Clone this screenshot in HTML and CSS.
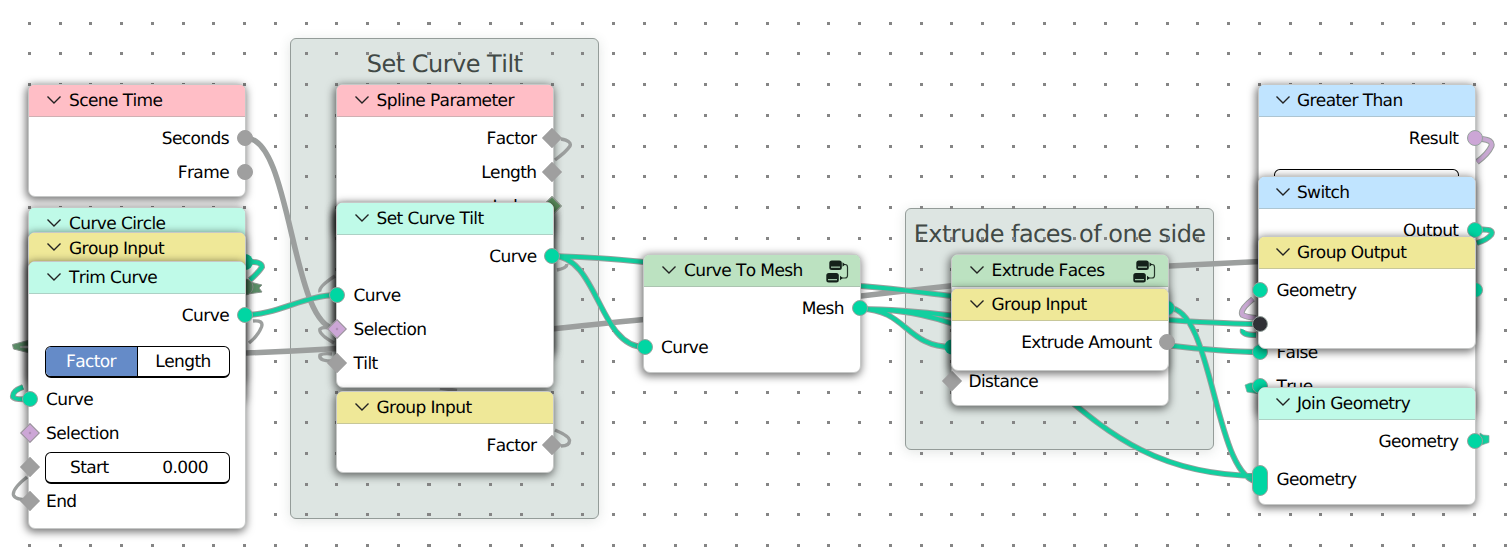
FILE: index.html
```html
<!DOCTYPE html>
<html lang="en">
<head>
<meta charset="utf-8">
<title>Geometry Nodes</title>
<link rel="stylesheet" href="styles.css">
</head>
<body>
<svg class="defs" width="0" height="0">
  <symbol id="chev" viewBox="0 0 16 10"><path d="M1.500 1.500 8 8l6.500-6.500" fill="none" stroke="#222" stroke-width="1.400"/></symbol>
  <symbol id="tree" viewBox="0 0 24 24">
    <rect x="4.300" y="1.500" width="12.500" height="9.500" rx="2.500" fill="#14211a"/><rect x="6" y="7.500" width="9" height="1.300" fill="#9fc3a6"/>
    <rect x="1.300" y="14" width="12.500" height="9.500" rx="2.500" fill="#14211a"/><rect x="3" y="20" width="9" height="1.300" fill="#9fc3a6"/>
    <path d="M18 5.500h2q2.500 0 2.500 2.500v8.500q0 2.500-2.500 2.500H16" fill="none" stroke="#26362b" stroke-width="1.200"/>
    <path d="M17.500 3.200l2.800 2.300-2.800 2.300zM15 16.700l2.800 2.300-2.800 2.300z" fill="#14211a"/>
  </symbol>
</svg>
<main class="canvas">
  <section class="frame frame-tilt"><h2>Set Curve Tilt</h2></section>
  <section class="frame frame-extrude"><h2>Extrude faces of one side</h2></section>

  <svg class="layer" width="1507" height="550">
    <path class="dots" d="M-3 23.500H1507M-3 53.500H1507M-3 84.500H1507M-3 115.500H1507M-3 146.500H1507M-3 176.500H1507M-3 207.500H1507M-3 238.500H1507M-3 269.500H1507M-3 299.500H1507M-3 330.500H1507M-3 361.500H1507M-3 392.500H1507M-3 422.500H1507M-3 453.500H1507M-3 484.500H1507M-3 514.500H1507M-3 545.500H1507"/>
    <path class="wire thick" d="M246 138C292 138 291 329 337 329M246 353C300 351 340 349 400 344S556 328 644 319.500L861 296S1100 268 1169 266L1260 261.500"/>
    <path class="edge" d="M246 315C276 315 306 295 337 295M553 256C598 256 599 347 644 347M553 256C590 257 615 259 644 262L861 286C900 289 925 293 952 296L1169 320C1200 322 1230 324 1260 324M861 309C971 309 1150 352 1260 352M861 309C906 309 906 347 952 347M861 309C1060 309 1060 476 1260 476M1169 308C1214 308 1214 482 1260 482"/>
    <path class="green" d="M246 315C276 315 306 295 337 295M553 256C598 256 599 347 644 347M553 256C590 257 615 259 644 262L861 286C900 289 925 293 952 296L1169 320C1200 322 1230 324 1260 324M861 309C971 309 1150 352 1260 352M861 309C906 309 906 347 952 347M861 309C1060 309 1060 476 1260 476M1169 308C1214 308 1214 482 1260 482"/>
    <path class="wire loop" d="M27 477Q12 489 13.500 495Q15 500 30 500M253 321Q264 320 261.500 327Q258 336 249 343M561 139Q572 141 570 146Q566 152 555 160M557 270Q567 268 567 264M335 276Q318 287 320 292M334 343Q318 334 320 329Q324 326 332 329M337 361Q318 362 320 355Q324 353 332 354M440 388L457 390.500M555 430Q569 436 569.500 440Q570 446 561 446"/>
    <path class="edge" d="M247 262Q262 261 262 267Q259 272 250 280M23 387Q12 391 13 397Q15 400 29 399M1481 229.500Q1495 229 1491 235Q1487 240 1477 243M1243 329.500Q1241 335 1256 335"/>
    <path class="green" d="M247 262Q262 261 262 267Q259 272 250 280M23 387Q12 391 13 397Q15 400 29 399M1481 229.500Q1495 229 1491 235Q1487 240 1477 243M1243 329.500Q1241 335 1256 335"/>
    <path class="edge" d="M1482 139Q1493 140 1491.500 146Q1488 154 1477 162M1253 299Q1239 310 1242.500 315Q1246 317 1256 318"/>
    <path class="violet" d="M1482 139Q1493 140 1491.500 146Q1488 154 1477 162M1253 299Q1239 310 1242.500 315Q1246 317 1256 318"/>
    <circle cx="245" cy="262" r="8" fill="#12cf9f"/>
    <path class="olive" d="M250 282L262 285 259 288 262 292 248 294zM30 340L12.500 344.500 13.500 349 30 353V349L20 347 30 345z"/>
    <circle class="olive" cx="245" cy="287" r="8"/>
    <path class="tip" d="M1245 385l5-2h10v11l-13-2zM1480 433l3 2 6 .5v7l-9 3z"/>
    <circle cx="952" cy="347" r="7.500" fill="#00d6a3"/>
  </svg>

  <article class="node scene-time">
    <header class="input"><svg><use href="#chev"/></svg>Scene Time</header>
    <div class="row out">Seconds<i class="dot gray"></i></div>
    <div class="row out">Frame<i class="dot gray"></i></div>
  </article>

  <article class="node curve-circle"><header class="geo"><svg><use href="#chev"/></svg>Curve Circle</header></article>
  <article class="node group-a"><header class="group"><svg><use href="#chev"/></svg>Group Input</header></article>
  <article class="node trim">
    <header class="geo"><svg><use href="#chev"/></svg>Trim Curve</header>
    <div class="row out">Curve<i class="dot teal"></i></div>
    <div class="toggle"><span class="on">Factor</span><span>Length</span></div>
    <div class="row">Curve<i class="dot teal"></i></div>
    <div class="row">Selection<i class="dia pink"></i></div>
    <div class="row"><div class="field"><span>Start</span><span>0.000</span></div><i class="dia gray"></i></div>
    <div class="row">End<i class="dia gray"></i></div>
  </article>

  <article class="node spline">
    <header class="input"><svg><use href="#chev"/></svg>Spline Parameter</header>
    <div class="row out">Factor<i class="dia gray"></i></div>
    <div class="row out">Length<i class="dia gray"></i></div>
    <div class="row out">Index<i class="dia moss"></i></div>
  </article>
  <article class="node under-tilt"></article>
  <article class="node under-tilt"></article>
  <article class="node tilt">
    <header class="geo"><svg><use href="#chev"/></svg>Set Curve Tilt</header>
    <div class="row out">Curve<i class="dot teal"></i></div>
    <div class="row gap">Curve<i class="dot teal"></i></div>
    <div class="row">Selection<i class="dia pink"></i></div>
    <div class="row">Tilt<i class="dia gray"></i></div>
  </article>
  <article class="node group-b">
    <header class="group"><svg><use href="#chev"/></svg>Group Input</header>
    <div class="row out">Factor<i class="dia gray"></i></div>
  </article>

  <article class="node to-mesh">
    <header class="tree"><svg><use href="#chev"/></svg>Curve To Mesh<svg class="icon"><use href="#tree"/></svg></header>
    <div class="row out">Mesh<i class="dot teal"></i></div>
    <div class="row gap">Curve<i class="dot teal"></i></div>
  </article>

  <article class="node extrude">
    <header class="tree"><svg><use href="#chev"/></svg>Extrude Faces<svg class="icon"><use href="#tree"/></svg></header>
    <div class="row out mesh-out"><i class="dot teal"></i></div>
    <div class="row distance">Distance<i class="dia gray"></i></div>
  </article>
  <article class="node group-c">
    <header class="group"><svg><use href="#chev"/></svg>Group Input</header>
    <div class="row out">Extrude Amount<i class="dot gray"></i></div>
  </article>

  <article class="node wide greater">
    <header class="math"><svg><use href="#chev"/></svg>Greater Than</header>
    <div class="row out">Result<i class="dot pink"></i></div>
    <div class="field menu"></div>
  </article>
  <article class="node wide switch">
    <header class="math"><svg><use href="#chev"/></svg>Switch</header>
    <div class="row out">Output<i class="dot teal"></i></div>
    <div class="row out hidden-out"><i class="dot teal"></i></div>
    <div class="row false">False<i class="dot teal"></i></div>
    <div class="row">True<i class="dot teal"></i></div>
  </article>
  <article class="node wide output">
    <header class="group"><svg><use href="#chev"/></svg>Group Output</header>
    <div class="row">Geometry<i class="dot teal"></i></div>
    <div class="row"><i class="dot dark"></i></div>
  </article>
  <article class="node wide join">
    <header class="geo"><svg><use href="#chev"/></svg>Join Geometry</header>
    <div class="row out">Geometry<i class="dot teal"></i></div>
    <div class="row gap">Geometry<i class="dot teal multi"></i></div>
  </article>
</main>
</body>
</html>
```
FILE: styles.css
```css
body { margin: 0; background: #fff; }
* { box-sizing: border-box; }
.defs { position: absolute; }
.canvas { position: relative; width: 1507px; height: 550px; overflow: hidden; font: 17px/34px "DejaVu Sans", sans-serif; letter-spacing: -0.6px; font-kerning: none; text-rendering: geometricPrecision; color: #000; }
.layer { position: absolute; left: 0; top: 0; }
.dots { fill: none; stroke: #858585; stroke-width: 3; stroke-dasharray: 3 27.75; shape-rendering: crispEdges; }
.wire { fill: none; stroke: #9c9f9e; }
.thick { stroke-width: 5.5; }
.loop { stroke-width: 3.4; }
.edge { fill: none; stroke: #999e9c; stroke-width: 6; }
.green { fill: none; stroke: #12cf9f; stroke-width: 4; }
.violet { fill: none; stroke: #c8a8d2; stroke-width: 4; }
.olive { fill: #5a8c66; stroke: #8a948d; }
.tip { fill: #12cf9f; stroke: #8aa39b; stroke-width: .7; }

.frame { position: absolute; background: #dde5e2; border: 1.5px solid #949c99; border-radius: 6px; box-shadow: 0 2px 12px rgba(60, 80, 70, .15); }
.frame h2 { margin: 11px 0 0; font-size: 24px; line-height: 28px; font-weight: 400; letter-spacing: -0.52px; text-align: center; color: #414946; white-space: nowrap; }
.frame-tilt { left: 290.400px; top: 38px; width: 308.500px; height: 481px; }
.frame-extrude { left: 905.400px; top: 208.400px; width: 308.500px; height: 242px; }

.node { position: absolute; width: 218px; background: #fff; border: 1.5px solid #c6c8c7; border-radius: 7px; box-shadow: -1px 2px 8px 1px rgba(0, 0, 0, .55); white-space: nowrap; }
.node header { display: flex; align-items: center; height: 32px; padding: 2px 0 0 17px; gap: 7px; border-radius: 5px 5px 0 0; border-bottom: 1px solid rgba(150, 160, 155, .45); line-height: 29px; }
.node header svg { width: 16px; height: 10px; margin-top: -4px; }
.node header .icon { width: 24px; height: 24px; margin: -2px 11.500px 0 auto; }
.input { background: #ffbec6; }
.geo { background: #bffae8; }
.group { background: #efe898; }
.tree { background: #bce2c1; }
.math { background: #c0e4ff; }
.row { position: relative; height: 34px; padding: 0 16px 0 17px; }
header + .row { margin-top: 5px; }
.out { text-align: right; }
.gap { margin-top: 4.500px; }
.dot { position: absolute; left: -7.500px; top: 8px; width: 16px; height: 16px; border-radius: 8px; border: 1.300px solid #96a39e; }
.out .dot { left: auto; right: -7.500px; }
.dia { position: absolute; left: -6.500px; top: 9px; width: 14px; height: 14px; border: 1px solid #989898; transform: rotate(45deg); }
.out .dia { left: auto; right: -6.500px; }
.dia.pink::after { content: ""; position: absolute; left: 5px; top: 5px; width: 2px; height: 2px; background: #a98bb0; }
.gray { background: #9f9f9f; border-color: #9f9f9f; }
.teal { background: #00d6a3; }
.pink { background: #cca6d6; }
.moss { background: #598c5c; }
.dark { background: #303035; }
.dot.multi { top: 1.500px; height: 31px; }
.toggle { display: flex; width: 185px; height: 32px; margin: 13px 0 5px 15.500px; border: 1.500px solid #000; border-bottom-width: 2px; border-radius: 6px; overflow: hidden; line-height: 31px; text-align: center; }
.toggle span { flex: 1; }
.toggle .on { background: #658bc8; color: #fff; border-right: 1px solid #000; }
.field { display: flex; justify-content: space-between; width: 185px; height: 32px; margin: 0 0 0 -1px; padding: 0 21px 0 24px; border: 1.500px solid #000; border-bottom-width: 2px; border-radius: 6px; line-height: 30px; }
.row > .field { position: relative; top: 1px; }
.menu { margin: 13px 0 0 15px; }

.scene-time { left: 28px; top: 84px; height: 113px; }
.curve-circle { left: 28px; top: 207px; height: 194px; }
.group-a { left: 28px; top: 231.500px; height: 150px; }
.trim { left: 28px; top: 261px; height: 268px; }
.spline { left: 335.500px; top: 84px; height: 150px; }
.under-tilt { left: 335.500px; top: 207px; height: 147px; }
.tilt { left: 335.500px; top: 202px; height: 186px; }
.group-b { left: 335.500px; top: 391px; height: 82px; }
.to-mesh { left: 643px; top: 254px; height: 119px; }
.extrude { left: 950.500px; top: 254px; height: 152px; }
.distance { margin-top: 38.500px; }
.group-c { left: 950.500px; top: 288px; height: 83px; }
.wide { left: 1258.400px; }
.wide header { padding-left: 15.500px; gap: 6px; }
.wide .out { padding-right: 17px; }
.greater { top: 84px; height: 250px; }
.switch { top: 176px; height: 239px; }
.hidden-out { margin-top: 26px; }
.false { margin-top: 28px; }
.output { top: 236px; height: 113px; }
.join { top: 386.500px; height: 118px; }
```
